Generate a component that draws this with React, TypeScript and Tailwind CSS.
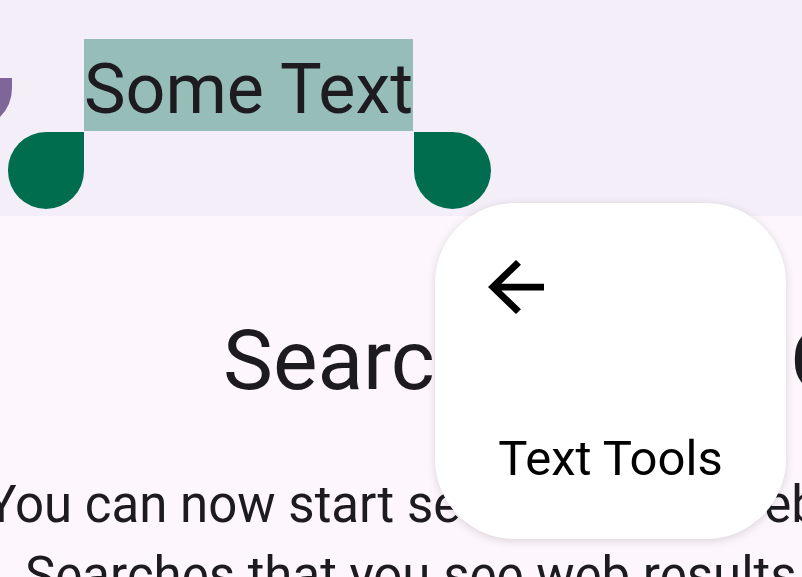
import React from 'react'

const font = { fontFamily: 'Roboto, "Noto Sans", sans-serif' }

function BackArrow() {
  return (
    <svg width="56" height="54" viewBox="4 4 16 16" preserveAspectRatio="none" className="block">
      <path d="M20 11H7.83l5.59-5.59L12 4l-8 8 8 8 1.41-1.41L7.83 13H20v-2z" fill="#000" />
    </svg>
  )
}

export default function App() {
  return (
    <div className="relative w-[802px] h-[577px] overflow-hidden bg-[#fdf7fd] text-[#1d1b20]" style={font}>
      {/* selection area */}
      <div className="relative h-[216px] bg-[#f4eef8]">
        <svg width="14" height="120" className="absolute left-0 top-0">
          <path d="M0 78H12V88A41 41 0 0 1 0 117Z" fill="#7f6699" />
        </svg>
        <div className="pt-[39px] pl-[84px] flex">
          <div className="h-[92px] bg-[#96bdb7] pt-[15px] text-[70px] leading-[70px] whitespace-nowrap">
            Some Text
          </div>
        </div>
        <div className="flex pl-[8px] pt-[1px]">
          <div className="w-[76px] h-[77px] bg-[#006d4f] rounded-full rounded-tr-none" />
          <div className="w-[330px]" />
          <div className="w-[77px] h-[77px] bg-[#006d4f] rounded-full rounded-tl-none" />
        </div>
      </div>

      {/* page content */}
      <div className="flex flex-col whitespace-nowrap">
        <div className="mt-[103px] ml-[223px] text-[84px] leading-[84px]">Search History Overview</div>
        <div className="mt-[66px] ml-[-14px] text-[51px] leading-[71px]">
          You can now start searching the web
        </div>
        <div className="ml-[25px] text-[51px] leading-[71px]">Searches that you see web results</div>
      </div>

      {/* text tools popup */}
      <div className="absolute left-[435px] top-[203px] w-[351px] h-[336px] bg-white rounded-[80px] shadow-[0_2px_10px_rgba(0,0,0,0.14)] flex flex-col">
        <div className="pt-[57px] pl-[53px]">
          <BackArrow />
        </div>
        <div className="mt-[120px] text-center text-[49px] leading-[49px] text-black">Text Tools</div>
      </div>
    </div>
  )
}
